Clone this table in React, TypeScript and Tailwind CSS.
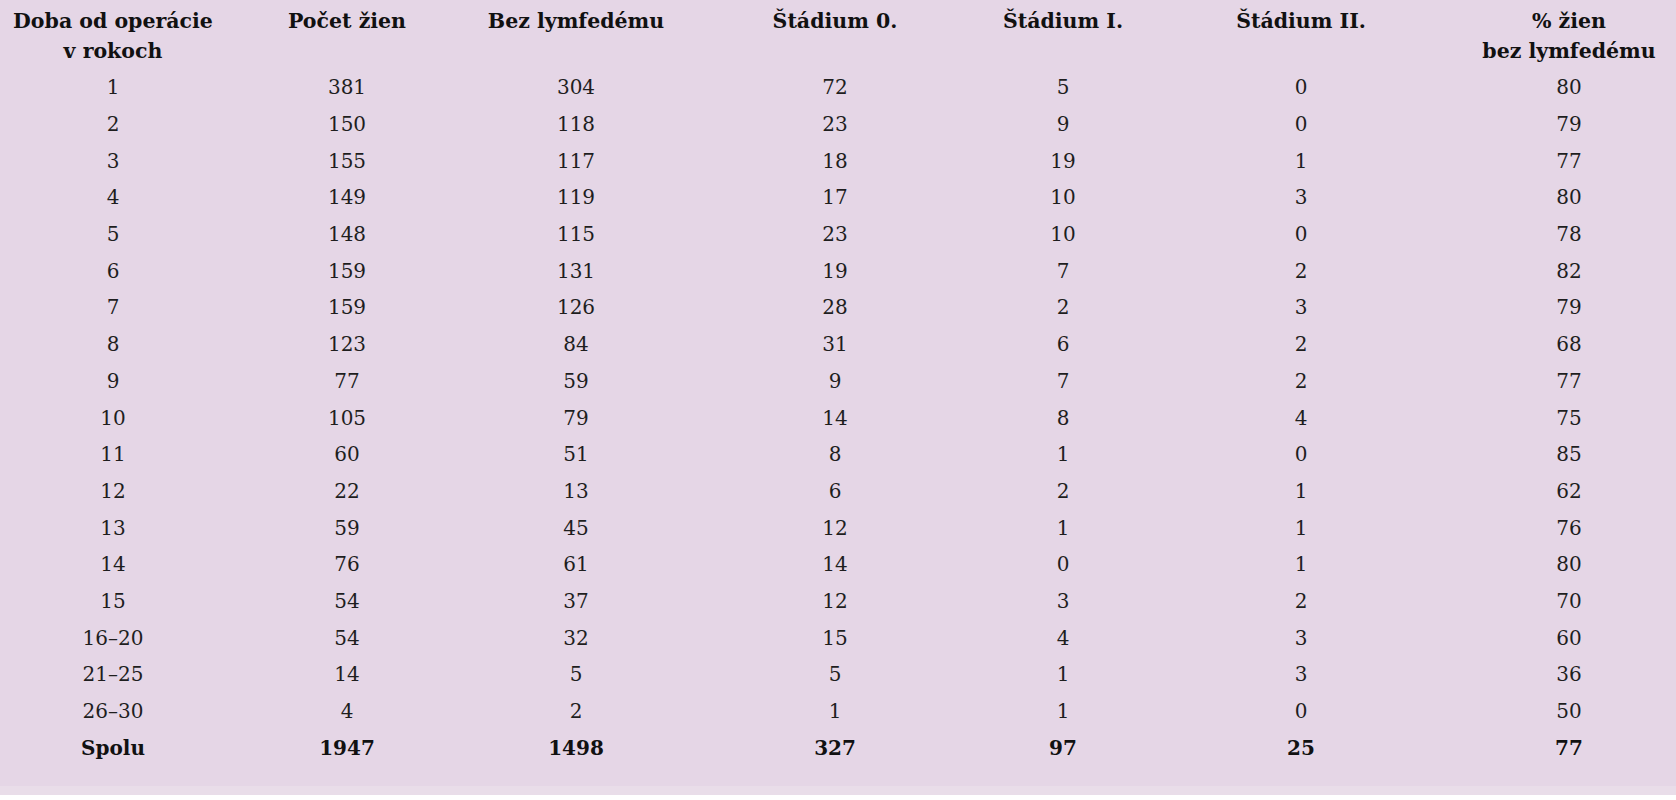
const COLS = ["w-[226px]", "w-[242px]", "w-[216px]", "w-[302px]", "w-[154px]", "w-[322px]", "w-[214px]"];

const ROWS: string[][] = [
  ["1", "381", "304", "72", "5", "0", "80"],
  ["2", "150", "118", "23", "9", "0", "79"],
  ["3", "155", "117", "18", "19", "1", "77"],
  ["4", "149", "119", "17", "10", "3", "80"],
  ["5", "148", "115", "23", "10", "0", "78"],
  ["6", "159", "131", "19", "7", "2", "82"],
  ["7", "159", "126", "28", "2", "3", "79"],
  ["8", "123", "84", "31", "6", "2", "68"],
  ["9", "77", "59", "9", "7", "2", "77"],
  ["10", "105", "79", "14", "8", "4", "75"],
  ["11", "60", "51", "8", "1", "0", "85"],
  ["12", "22", "13", "6", "2", "1", "62"],
  ["13", "59", "45", "12", "1", "1", "76"],
  ["14", "76", "61", "14", "0", "1", "80"],
  ["15", "54", "37", "12", "3", "2", "70"],
  ["16–20", "54", "32", "15", "4", "3", "60"],
  ["21–25", "14", "5", "5", "1", "3", "36"],
  ["26–30", "4", "2", "1", "1", "0", "50"],
];

const TOTAL = ["Spolu", "1947", "1498", "327", "97", "25", "77"];

const HEAD: [string, string?][] = [
  ["Doba od operácie", "v rokoch"],
  ["Počet žien"],
  ["Bez lymfedému"],
  ["Štádium 0."],
  ["Štádium I."],
  ["Štádium II."],
  ["% žien", "bez lymfedému"],
];

export default function App() {
  return (
    <div className="flex h-[800px] w-[1676px] flex-col bg-white font-['DejaVu_Serif',serif] text-[#1e1e1e]">
      <div className="flex flex-1 flex-col bg-[#e5d6e6]">
        {/* header, two lines */}
        <div className="flex h-[69px] pt-[6px] text-[20.5px] font-bold leading-[30px] text-[#111]">
          {HEAD.map(([a, b], i) => (
            <div key={i} className={`${COLS[i]} shrink-0 text-center whitespace-nowrap`}>
              <div>{a}</div>
              {b && <div>{b}</div>}
            </div>
          ))}
        </div>
        {ROWS.map((r, ri) => (
          <div key={ri} className="flex h-[36.7px] items-center text-[20px]">
            {r.map((c, ci) => (
              <div key={ci} className={`${COLS[ci]} shrink-0 text-center`}>
                {c}
              </div>
            ))}
          </div>
        ))}
        <div className="flex h-[36.7px] items-center text-[20px] font-bold text-[#111]">
          {TOTAL.map((c, ci) => (
            <div key={ci} className={`${COLS[ci]} shrink-0 text-center`}>
              {c}
            </div>
          ))}
        </div>
        <div className="flex-1" />
      </div>
      <div className="h-[9px] bg-[#e9dde9]" />
      <div className="h-[5px]" />
    </div>
  );
}
